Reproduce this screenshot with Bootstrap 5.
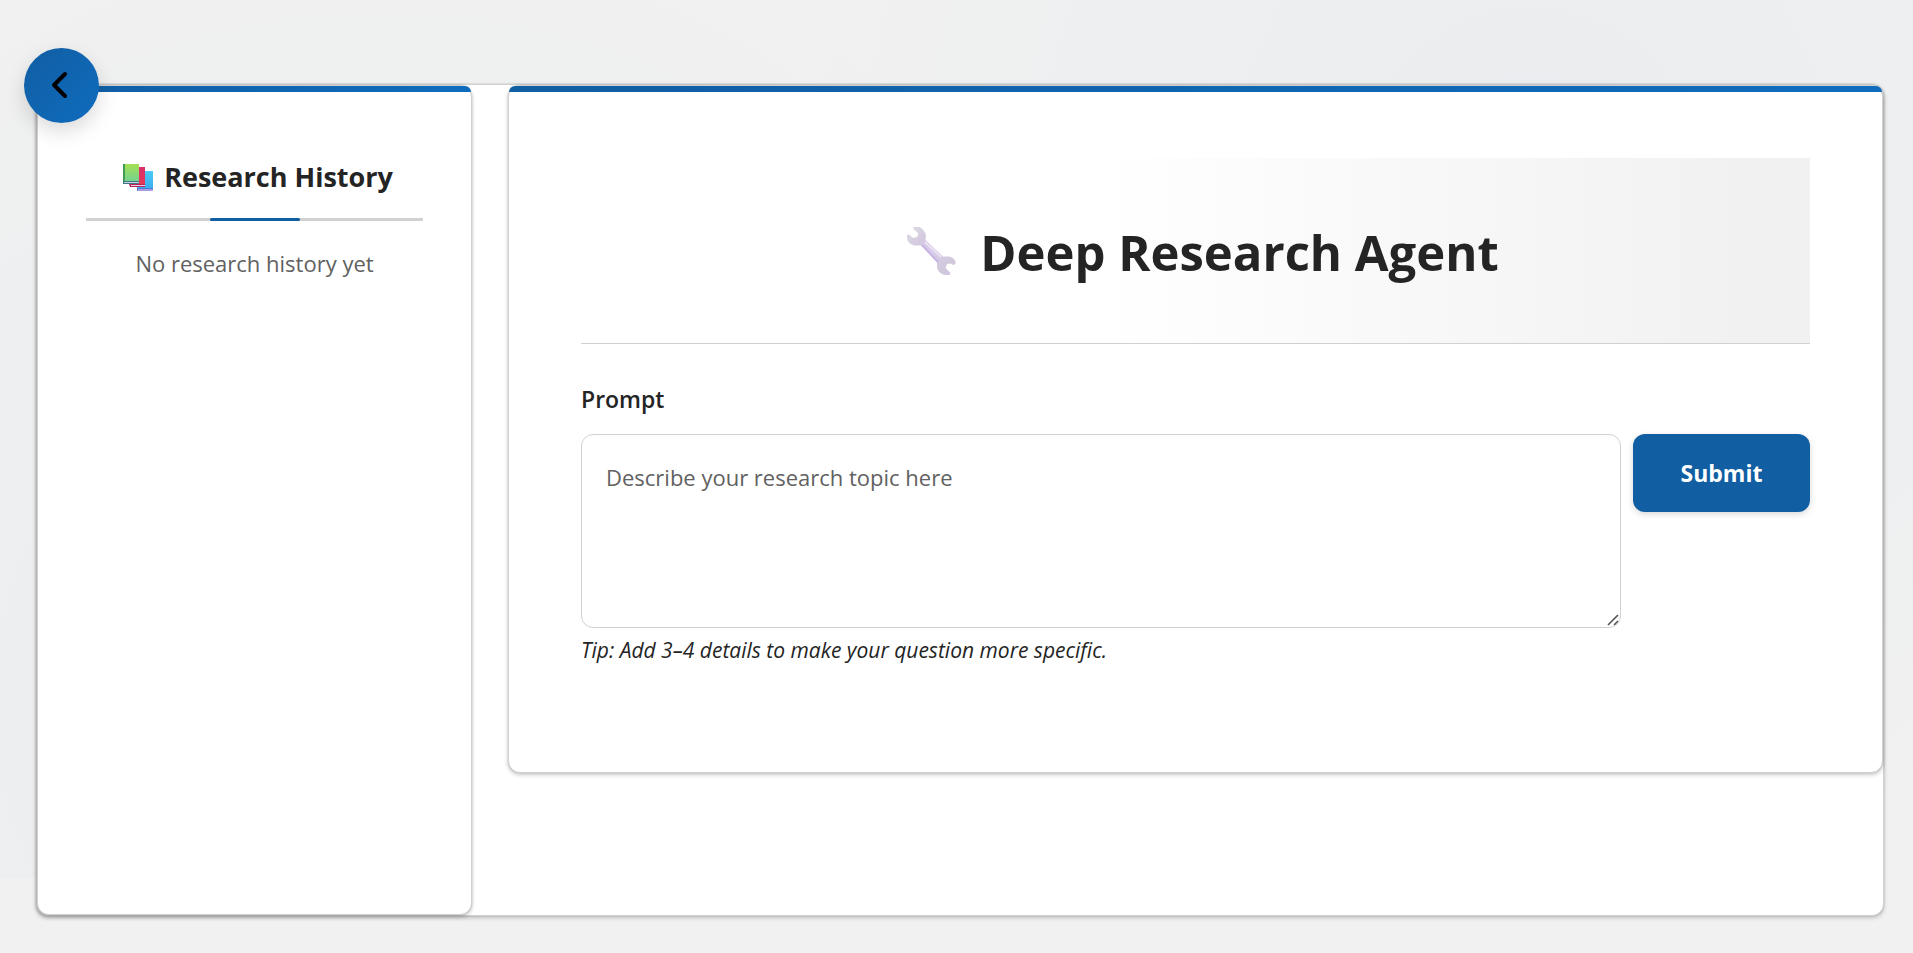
<!DOCTYPE html>
<html lang="en">
<head>
<meta charset="utf-8">
<meta name="viewport" content="width=device-width, initial-scale=1">
<title>Deep Research Agent</title>
<link href="https://cdn.jsdelivr.net/npm/bootstrap@5.3.0/dist/css/bootstrap.min.css" rel="stylesheet">
<style>
  :root { --brand: #115ea3; --brand-light: #0f6cbd; --line: #d1d1d1; --ink: #242424; --muted-ink: #616161; }
  body {
    font-family: "Segoe UI", "Open Sans", "Noto Sans", sans-serif;
    color: var(--ink);
    background:
      radial-gradient(circle at 20% 80%, rgba(15,108,189,.035), transparent 50%) top / 100% 878px no-repeat,
      radial-gradient(circle at 80% 20%, rgba(15,108,189,.03), transparent 45%) top / 100% 878px no-repeat,
      #f1f1f1;
  }
  .page { padding: 84px 29px 37px 36px; }
  .panel { background: #fff; border: 1px solid var(--line); border-radius: 12px; box-shadow: 0 2px 4px rgba(0,0,0,.2), 0 0 2px rgba(0,0,0,.18); }
  .shell { gap: 36px; }
  .stripe::before { content: ""; display: block; height: 6px; border-radius: 11px 11px 0 0; background: linear-gradient(90deg, var(--brand), var(--brand-light)); }
  .history { flex: 0 0 435px; min-height: 830px; }
  .history-body { padding: 64px 48px 48px; }
  .history h2 { font-size: 27px; line-height: 42px; padding-bottom: 20px; border-bottom: 3px solid var(--line); }
  .history h2::after { content: ""; position: absolute; bottom: -3px; left: calc(50% - 45px); width: 90px; height: 3px; border-radius: 2px; background: var(--brand); }
  .empty { font-size: 22px; line-height: 36px; color: var(--muted-ink); }
  .toggle { top: -37px; left: -13px; width: 75px; height: 75px; background: linear-gradient(135deg, var(--brand), var(--brand-light)); box-shadow: 0 8px 20px rgba(0,0,0,.15); z-index: 2; }
  .workspace { min-width: 0; }
  .workspace-body { padding: 66px 72px 106px; }
  .hero { padding: 60px 0 57px; background: linear-gradient(90deg, #fff 42%, #f1f1f1 95%); border-bottom: 1px solid var(--line); gap: 24px; }
  .hero h1 { font-size: 49px; line-height: 68px; }
  .field-label { font-size: 23px; line-height: 32px; margin: 39px 0 19px; }
  .prompt-row { gap: 12px; }
  .prompt { font-size: 22px; line-height: 36px; height: 194px; padding: 24px; border: 1px solid var(--line); border-radius: 12px; resize: vertical; }
  .prompt::placeholder { color: var(--muted-ink); }
  .prompt::-webkit-resizer { background: url("data:image/svg+xml,%3Csvg xmlns='http://www.w3.org/2000/svg' viewBox='0 0 15 15' stroke='%23555' stroke-width='1.6'%3E%3Cpath d='M3 13 13 3M9 13l4-4'/%3E%3C/svg%3E") center / contain no-repeat; }
  .send { font-size: 23px; width: 177px; height: 78px; color: #fff; background: var(--brand); border-radius: 12px; box-shadow: 0 2px 6px rgba(0,0,0,.16); }
  .tip { font-size: 21px; line-height: 32px; margin-top: 6px; }
</style>
</head>
<body>
<div class="page">
  <div class="shell panel d-flex align-items-start position-relative">
    <button type="button" class="toggle btn border-0 rounded-circle p-0 position-absolute d-flex align-items-center justify-content-center" aria-label="Collapse history">
      <svg width="30" height="30" viewBox="0 0 30 30" fill="none" stroke="#000" stroke-width="4" stroke-linecap="round" stroke-linejoin="round" aria-hidden="true"><path d="M18 3 7 14l11 11"/></svg>
    </button>

    <aside class="history panel stripe">
      <div class="history-body text-center">
        <h2 class="fw-bold position-relative d-flex align-items-center justify-content-center gap-2 mb-4">
          <svg width="40" height="32" viewBox="-6 -1 40 32" aria-hidden="true">
            <defs>
              <linearGradient id="green" x2="0" y2="1"><stop stop-color="#a5e052"/><stop offset="1" stop-color="#73d293"/></linearGradient>
              <linearGradient id="blue" x2="0" y2="1"><stop stop-color="#4acbf4"/><stop offset="1" stop-color="#3badf0"/></linearGradient>
              <linearGradient id="pink" x2="0" y2="1"><stop stop-color="#d9306f"/><stop offset="1" stop-color="#e83854"/></linearGradient>
            </defs>
            <path fill="url(#blue)" d="M15 9h16v18H15z"/><path fill="#4b7ad4" d="M15 26h16v1H17v2H15z"/><path fill="#a99de4" d="M16 27h15v2H16z"/>
            <path fill="url(#pink)" d="M8 5h15v18H8z"/><path fill="#b82457" d="M7 22h16v1H9v1h14v1H8z"/><path fill="#e9cfe9" d="M9 23h14v1H9z"/>
            <path fill="url(#green)" d="M2 2h15v18H2z"/><path fill="#429b53" d="M1 2h2v18H1z"/><path fill="#397b80" d="M1 19h16v1H3v1h14v1H1z"/><path fill="#d5cbe9" d="M2 20h15v1H2z"/>
          </svg>
          Research History
        </h2>
        <p class="empty mb-0">No research history yet</p>
      </div>
    </aside>

    <main class="workspace panel stripe flex-grow-1">
      <div class="workspace-body">
        <header class="hero d-flex align-items-center justify-content-center">
          <svg width="64" height="54" viewBox="-12 0 64 54" aria-hidden="true">
            <defs>
              <linearGradient id="metal" x2="1" y2="1"><stop stop-color="#dfdce4"/><stop offset=".28" stop-color="#d3cadf"/><stop offset=".5" stop-color="#d9cbed"/><stop offset=".8" stop-color="#d0c9da"/><stop offset="1" stop-color="#d5c3e4"/></linearGradient>
            </defs>
            <path fill="url(#metal)" d="M9.500 2h6Q20 4 22 10.500L21.500 15 39 31.500h6q5 1 6.500 5V39l-2 1-3-1.500-3.500.5-1.500 4 5 5-1 2h-5Q34 48 33 42.500v-5L17 20.500h-6.500Q4 19 3 13.500v-3L4.500 9 9 13l4-1 1.500-3.500L9.500 4z"/>
            <path fill="none" stroke="#b897e0" stroke-opacity=".45" stroke-width="2" d="m18 20 16 17"/>
            <path fill="none" stroke="#eee7f6" stroke-opacity=".8" stroke-width="2" d="m21 17 16 15"/>
          </svg>
          <h1 class="fw-bold mb-0">Deep Research Agent</h1>
        </header>

        <form>
          <label for="prompt" class="field-label fw-semibold d-block">Prompt</label>
          <div class="prompt-row d-flex align-items-start">
            <textarea id="prompt" class="prompt form-control" placeholder="Describe your research topic here" aria-describedby="tip"></textarea>
            <button type="submit" class="send btn border-0 fw-bold flex-shrink-0">Submit</button>
          </div>
          <p id="tip" class="tip fst-italic mb-0">Tip: Add 3–4 details to make your question more specific.</p>
        </form>
      </div>
    </main>
  </div>
</div>
<script src="https://cdn.jsdelivr.net/npm/bootstrap@5.3.0/dist/js/bootstrap.bundle.min.js"></script>
</body>
</html>
